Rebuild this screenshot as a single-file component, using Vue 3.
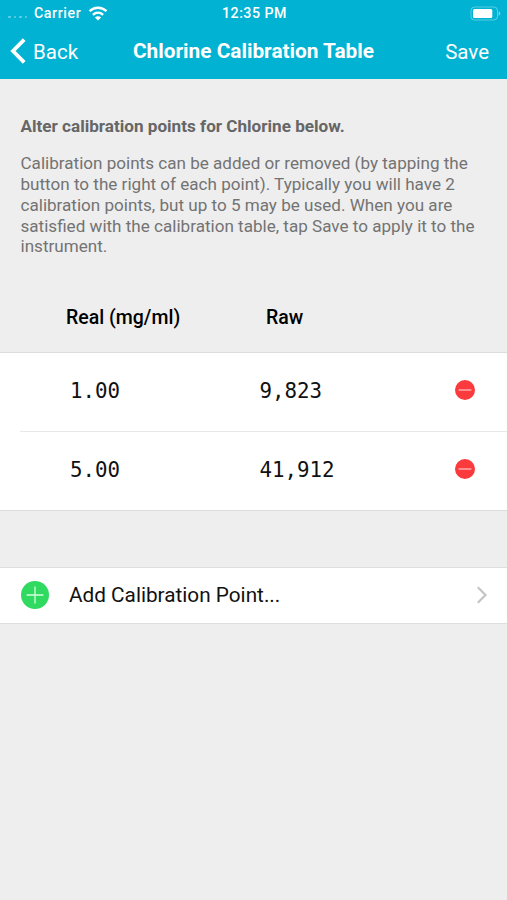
<script setup>
import { ref } from 'vue'

const points = ref([
  { id: 1, real: '1.00', raw: '9,823' },
  { id: 2, real: '5.00', raw: '41,912' }
])

const removePoint = (id) => {
  points.value = points.value.filter((point) => point.id !== id)
}

const addPoint = () => {
  if (points.value.length >= 5) return
  points.value.push({ id: Date.now(), real: '0.00', raw: '0' })
}
</script>

<template>
  <div class="page">
    <header class="header">
      <div class="status-bar">
        <div class="carrier">
          <span class="signal"><i v-for="n in 4" :key="n"></i></span>
          <span class="carrier-name">Carrier</span>
          <svg class="wifi" width="20" height="15" viewBox="0 0 20 15" fill="none" stroke="#fff" stroke-width="2.5">
            <path d="M1.5 5.2C6.4.6 13.6.6 18.5 5.2" />
            <path d="M4.9 8.9C7.9 6.1 12.1 6.1 15.1 8.9" />
            <path d="M10 14.5 6.9 11.4C8.7 9.8 11.3 9.8 13.1 11.4Z" fill="#fff" stroke="none" />
          </svg>
        </div>
        <span class="time">12:35 PM</span>
        <svg class="battery" width="31" height="15" viewBox="0 0 31 15">
          <rect x="1" y="1" width="26.5" height="13" rx="3.6" fill="none" stroke="#fff" stroke-opacity=".35" />
          <rect x="3" y="3" width="19.3" height="9" rx="1.5" fill="#fff" />
          <path d="M28.7 5.2Q30.3 5.7 30.3 7.5T28.7 9.8Z" fill="#fff" fill-opacity=".45" />
        </svg>
      </div>
      <nav class="nav-bar">
        <button class="nav-button back">
          <svg width="16" height="26" viewBox="0 0 16 26" fill="none" stroke="#fff" stroke-width="3.8">
            <path d="M14.2 1.7 3 13 14.2 24.3" />
          </svg>
          <span class="nav-label">Back</span>
        </button>
        <h1 class="title">Chlorine Calibration Table</h1>
        <button class="nav-button nav-label save">Save</button>
      </nav>
    </header>

    <section class="intro">
      <h2>Alter calibration points for Chlorine below.</h2>
      <p>
        Calibration points can be added or removed (by tapping the<br />
        button to the right of each point). Typically you will have 2<br />
        calibration points, but up to 5 may be used. When you are<br />
        satisfied with the calibration table, tap Save to apply it to the<br />
        instrument.
      </p>
    </section>

    <div class="columns">
      <span class="column-real">Real (mg/ml)</span>
      <span>Raw</span>
    </div>

    <ul class="points">
      <li v-for="point in points" :key="point.id" class="point">
        <span class="real">{{ point.real }}</span>
        <span class="raw">{{ point.raw }}</span>
        <button class="remove" aria-label="Remove point" @click="removePoint(point.id)">
          <svg width="20" height="20" viewBox="0 0 20 20">
            <circle cx="10" cy="10" r="10" fill="#fa3a3c" />
            <path d="M3.6 10H16.4" stroke="#ffd4d4" stroke-width="1.1" />
          </svg>
        </button>
      </li>
    </ul>

    <button class="add" @click="addPoint">
      <svg width="28" height="28" viewBox="0 0 28 28">
        <circle cx="14" cy="14" r="14" fill="#30d960" />
        <path d="M5.6 14H22.4M14 5.6V22.4" stroke="#d2ffdc" stroke-width="1.3" />
      </svg>
      <span class="add-label">Add Calibration Point...</span>
      <svg class="chevron" width="12" height="18" viewBox="0 0 12 18" fill="none" stroke="#c4c4c6" stroke-width="2.2">
        <path d="M1.8 1.2 9.5 9 1.8 16.8" />
      </svg>
    </button>
  </div>
</template>

<style>
body {
  background: #eee;
}
</style>

<style scoped>
.page {
  min-height: 900px;
  background: #eee;
  color: #111;
  font-family: Roboto, "Liberation Sans", sans-serif;
}

button {
  border: none;
  padding: 0;
  background: none;
  color: inherit;
  font: inherit;
  cursor: pointer;
}

svg {
  display: block;
  flex: none;
}

.header {
  box-sizing: border-box;
  height: 79px;
  background: #01b2d2;
  color: #fff;
}

.status-bar {
  display: grid;
  grid-template-columns: 1fr auto 1fr;
  align-items: center;
  height: 26px;
  padding: 0 6px 0 8px;
  font-size: 14.2px;
  font-weight: 500;
}

.carrier {
  display: flex;
  align-items: center;
}

.signal {
  display: flex;
  gap: 3px;
  width: 26px;
  padding-top: 8px;
}

.signal i {
  width: 2.6px;
  height: 2.6px;
  border-radius: 50%;
  background: rgba(255, 255, 255, 0.4);
}

.carrier-name {
  width: 54px;
  letter-spacing: 0.6px;
}

.time {
  letter-spacing: 0.5px;
}

.battery {
  justify-self: end;
}

.nav-bar {
  display: grid;
  grid-template-columns: 1fr auto 1fr;
  align-items: center;
  height: 50px;
  padding: 0 10px;
}

.nav-button {
  font-size: 20.5px;
}

.nav-label {
  padding-top: 2px;
}

.back {
  display: flex;
  align-items: center;
  gap: 7px;
}

.save {
  justify-self: end;
  margin-right: 8px;
}

.title {
  margin: 0;
  font-size: 20.8px;
  font-weight: 700;
}

.intro {
  padding: 37px 0 0 20.5px;
  color: #737373;
  font-size: 17.08px;
  line-height: 20.75px;
  white-space: nowrap;
}

.intro h2 {
  margin: 0;
  color: #666;
  font-size: 17.12px;
  font-weight: 700;
}

.intro p {
  margin: 16.5px 0 0;
}

.columns {
  display: flex;
  align-items: center;
  height: 70.5px;
  margin-top: 24px;
  padding: 3px 0 0 66px;
  box-sizing: border-box;
  color: #000;
  font-size: 19.5px;
  font-weight: 500;
}

.column-real {
  width: 200px;
}

.points {
  margin: 0;
  padding: 0;
  border-top: 1px solid #dcdcdc;
  border-bottom: 1px solid #dcdcdc;
  background: #fff;
  list-style: none;
}

.point {
  box-sizing: border-box;
  display: flex;
  align-items: center;
  height: 78px;
  margin-left: 20px;
  padding: 0 32px 3px 50px;
  font-family: "DejaVu Sans Mono", monospace;
  font-size: 20.8px;
}

.point + .point {
  height: 79px;
  padding-bottom: 4px;
  border-top: 1px solid #e8e8e8;
}

.real,
.raw {
  padding-top: 2px;
}

.real {
  width: 189.5px;
}

.remove {
  margin-left: auto;
}

.add {
  box-sizing: border-box;
  display: flex;
  align-items: center;
  width: 100%;
  height: 57px;
  margin-top: 56px;
  padding: 0 19px 0 21px;
  border-top: 1px solid #dedede;
  border-bottom: 1px solid #dedede;
  background: #fff;
  font-size: 20.75px;
}

.add-label {
  margin-left: 20px;
}

.chevron {
  margin-left: auto;
}
</style>
